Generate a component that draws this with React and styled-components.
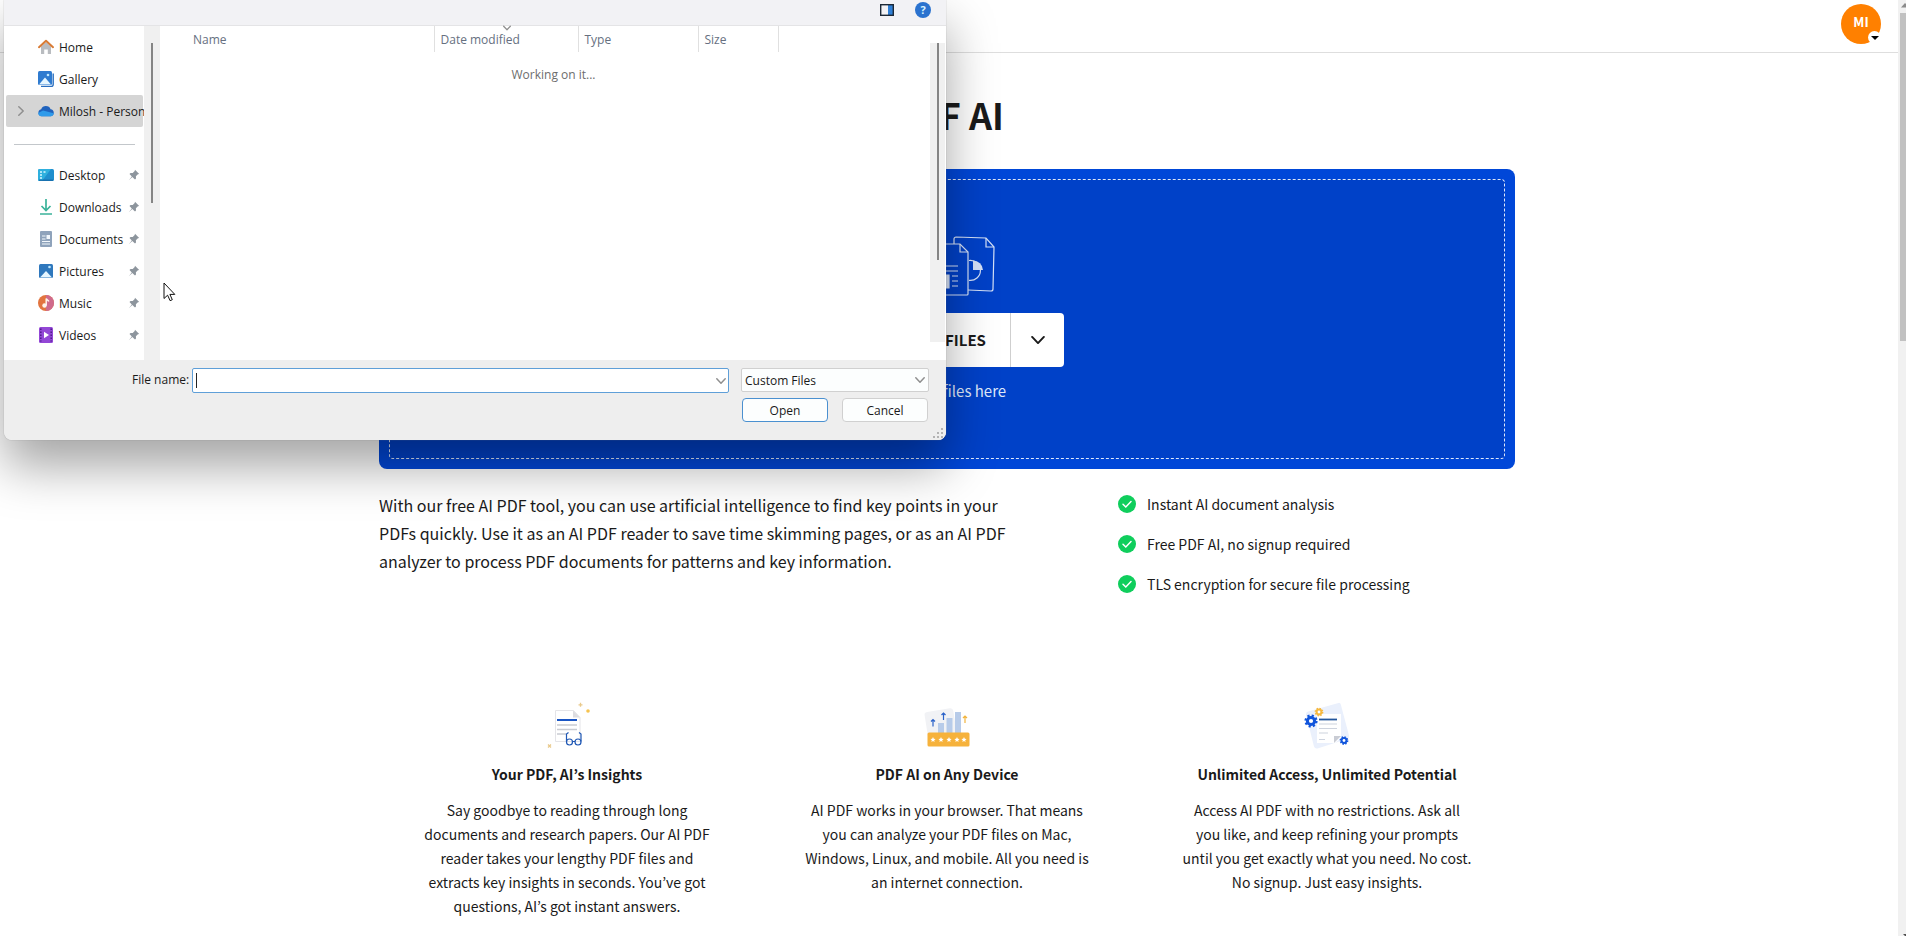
import React, { useState } from 'react'
import styled, { createGlobalStyle } from 'styled-components'

const places = [
    { name: "Home", icon: "home" },
    { name: "Gallery", icon: "gallery" },
    { name: "Milosh - Person", icon: "cloud", active: true }
];

const pinned = [
    { name: "Desktop", icon: "desktop" },
    { name: "Downloads", icon: "downloads" },
    { name: "Documents", icon: "documents" },
    { name: "Pictures", icon: "pictures" },
    { name: "Music", icon: "music" },
    { name: "Videos", icon: "videos" }
];

const benefits = [
    "Instant AI document analysis",
    "Free PDF AI, no signup required",
    "TLS encryption for secure file processing"
];

const features = [
    {
        icon: "insights",
        title: "Your PDF, AI’s Insights",
        text: "Say goodbye to reading through long documents and research papers. Our AI PDF reader takes your lengthy PDF files and extracts key insights in seconds. You’ve got questions, AI’s got instant answers."
    },
    {
        icon: "device",
        title: "PDF AI on Any Device",
        text: "AI PDF works in your browser. That means you can analyze your PDF files on Mac, Windows, Linux, and mobile. All you need is an internet connection."
    },
    {
        icon: "access",
        title: "Unlimited Access, Unlimited Potential",
        text: "Access AI PDF with no restrictions. Ask all you like, and keep refining your prompts until you get exactly what you need. No cost. No signup. Just easy insights."
    }
];

const placeIcons = {
    home: (
        <>
            <path d="M3 7.5 8 3l5 4.5V15H9.8v-4.5H6.2V15H3z" fill="#b9bcc0" />
            <path d="M1 8.2 8 1.8l7 6.4" fill="none" stroke="#d97b35" strokeWidth="2" strokeLinecap="round" strokeLinejoin="round" />
        </>
    ),
    gallery: (
        <>
            <path d="M15.2 2.5v11a2 2 0 0 1-2 2H3" fill="none" stroke="#2a6fc0" strokeWidth="1.4" />
            <rect x="0" y="0" width="14" height="14" rx="1.5" fill="#2f7bd0" />
            <path d="M1 13.5 7 6.5l6 7z" fill="#e6f6ff" />
            <circle cx="10" cy="4" r="1.3" fill="#bfe9ff" />
        </>
    ),
    cloud: (
        <>
            <path d="M3.5 13.2a3.5 3.5 0 0 1-.3-6.9A5 5 0 0 1 12.6 6.3a3.5 3.5 0 0 1 .4 6.9z" fill="#1f62bd" />
            <path d="M3.5 13.2c-2-.1-3.3-1.5-3.3-3.2L5 7.5l10.700 2.800c-.1 1.700-1.200 2.900-2.900 2.900z" fill="#2f9bea" />
        </>
    ),
    desktop: (
        <>
            <rect x="0" y="2" width="16" height="12" rx="1.5" fill="#1f8fce" />
            <path d="M0 3.5A1.5 1.5 0 0 1 1.5 2H13L4 14H1.5A1.5 1.5 0 0 1 0 12.5z" fill="#2fb0de" />
            <path d="M2 5h2M2 8h2M2 11h2M5.5 5h2" stroke="#d9f6ff" strokeWidth="1.5" />
            <path d="M1 13.2h14" stroke="#1769a8" strokeWidth="1.2" />
        </>
    ),
    downloads: (
        <path d="M8 0v11M3.5 7 8 11.5 12.5 7M2 15h12" fill="none" stroke="#3bb39a" strokeWidth="1.7" />
    ),
    documents: (
        <>
            <rect x="2" y="0" width="12" height="16" rx="1" fill="#8fa3bb" />
            <path d="M4 5h3.5M4 8h3.5M4 10.5h8M4 13h8" stroke="#f2f7fc" strokeWidth="1.2" />
            <rect x="8.5" y="4" width="3.5" height="4" fill="#f2f7fc" />
        </>
    ),
    pictures: (
        <>
            <rect x="1" y="1" width="14" height="14" rx="1.5" fill="#2f78bd" />
            <path d="M2 14.5 8 8l6 6.500z" fill="#e6f6ff" />
            <circle cx="11.5" cy="4" r="1.3" fill="#bfe9ff" />
        </>
    ),
    music: (
        <>
            <circle cx="8" cy="8" r="8" fill="#e2743f" />
            <path d="M8 0a8 8 0 0 1 0 16z" fill="#cf6a8c" />
            <circle cx="6.5" cy="10.5" r="2.2" fill="#fff3ea" />
            <path d="M8.2 10.5V3.5c.5 1.5 2 1.7 2.6 3" fill="none" stroke="#fff3ea" strokeWidth="1.5" />
        </>
    ),
    videos: (
        <>
            <rect x="1" y="0" width="14" height="16" rx="1.5" fill="#9347d6" />
            <path d="M2.8 1.5v13M13.2 1.5v13" stroke="#4f1b8c" strokeWidth="1.5" strokeDasharray="1.5 1.5" />
            <path d="M6 4.8 11 8l-5 3.2z" fill="#fff" />
        </>
    )
};

const PlaceIcon = ({ name }) => (
    <svg width="16" height="16" viewBox="0 0 16 16" aria-hidden="true">{placeIcons[name]}</svg>
)

const Pin = () => (
    <svg width="12" height="12" viewBox="0 0 12 12" aria-hidden="true">
        <path d="M7 .8 11.2 5l-1.3.3-2 2 .1 2.2-1 1L4.3 7.9.8 11.2l3-3.7L1.5 5l1-1 2.2.1 2-2z" fill="#8d959d" />
    </svg>
)

const Chevron = ({ size = 10, color = "#8f8f8f", width = 1.5 }) => (
    <svg width={size} height={size} viewBox="0 0 10 10" aria-hidden="true">
        <path d="M.8 2.8 5 7.2l4.2-4.4" fill="none" stroke={color} strokeWidth={width} strokeLinecap="round" strokeLinejoin="round" />
    </svg>
)

const CheckIcon = () => (
    <svg width="18" height="18" viewBox="0 0 18 18" aria-hidden="true">
        <circle cx="9" cy="9" r="9" fill="#0fce5c" />
        <path d="m5 9.3 2.8 2.7 5.2-5.4" fill="none" stroke="#fff" strokeWidth="1.5" strokeLinecap="round" />
    </svg>
)

const Gear = ({ x, y, r, color, hole = "#fff" }) => (
    <g transform={`translate(${x} ${y})`}>
        <circle r={r * 0.85} fill={color} />
        <circle r={r * 0.85} fill="none" stroke={color} strokeWidth={r * 0.5} strokeDasharray={`${r * 0.334} ${r * 0.334}`} />
        <circle r={r * 0.35} fill={hole} />
    </g>
)

const star = "M0-2.6.8-.8l1.8.2L1.2.7l.4 1.9L0 1.6l-1.6 1 .4-1.900-1.400-1.300 1.800-.2z";

const featureIcons = {
    insights: (
        <>
            <path d="M12.5 8.5h18l6.500 7v24H12.500z" fill="#fff" stroke="#e4e4e8" />
            <path d="M30 8.5v7h7z" fill="#dcdce0" />
            <path d="M14 18h20" stroke="#1a55c4" strokeWidth="2" />
            <path d="M14 23h20M14 27.5h20M14 32h9" stroke="#c9ccd2" strokeWidth="1.3" />
            <g fill="none" stroke="#1f57b4" strokeWidth="1.2">
                <circle cx="26.5" cy="40" r="3" />
                <circle cx="35" cy="40" r="3" />
                <path d="M29.5 39.5h2.500M23.5 39.5V32l2-1.5M38 39.5V32l-2-1.5" />
            </g>
            <path d="M37.5.8v4M35.5 2.8h4M5 42.5l3 3M8 42.5l-3 3" stroke="#e9c98a" strokeWidth="1.3" />
            <circle cx="45" cy="9" r="1.8" fill="#f6c34f" />
        </>
    ),
    device: (
        <>
            <rect x="3" y="8" width="29" height="27" rx="3" fill="#f1f2f5" transform="rotate(-9 17 21)" />
            <path d="M15 21h6v10h-6zM23.5 16h6v15h-6zM32 10h6v21h-6z" fill="#b7cbe9" />
            <path d="M10 24.5v-7M8 19.5l2-2 2 2M20.5 18v-7M18.5 13l2-2 2 2" fill="none" stroke="#2a62c9" strokeWidth="1.2" />
            <path d="M42 21v-7M40 16l2-2 2 2" fill="none" stroke="#f2b43c" strokeWidth="1.2" />
            <rect x="4.5" y="30.5" width="42" height="14" rx="1.5" fill="#f6b23c" />
            {[10, 18, 26, 34, 41].map(x => <path key={x} d={star} transform={`translate(${x} 37.5)`} fill="#fff" />)}
        </>
    ),
    access: (
        <>
            <path d="M3 12.5a3 3 0 0 1 2-3L35.5.9a2 2 0 0 1 2.3 1.5L46 33.5a3 3 0 0 1-2 3.5L14.5 46.5a3 3 0 0 1-3.5-2z" fill="#eaf0fc" />
            <path d="M14 12h24v24l-6 5H14z" fill="#fff" />
            <path d="M31 34h7l-7 7z" fill="#c9ccd4" />
            <path d="M16 17.5h18" stroke="#23569c" strokeWidth="1.8" />
            <path d="M16 22h18M16 26.5h18M16 31h9M16 37.5h6" stroke="#cdd3de" strokeWidth="1.2" />
            <Gear x={8} y={19} r={6} color="#1155dc" />
            <Gear x={16} y={10} r={4} color="#f6b83f" />
            <Gear x={41} y={38.5} r={4} color="#1155dc" />
        </>
    )
};

const FilesArt = () => (
    <svg width="96" height="60" viewBox="0 0 96 60" fill="none" stroke="#d5e1f7" strokeWidth="1.2" aria-hidden="true">
        <path d="M41 8V3a2 2 0 0 0-2-2L9 2 1 10l1 42a2 2 0 0 0 2 2l23-1" />
        <path d="M55 8V3a2 2 0 0 1 2-2l30 1 8 9-1 42a2 2 0 0 1-2 2l-23-1" />
        <path d="m87 2 0 9h8" />
        <path d="M27 10a2 2 0 0 1 2-2h32l8 8v42a1 1 0 0 1-1 1H28a1 1 0 0 1-1-1z" fill="#0041c8" />
        <path d="M61 8v8h8M33 30h26M33 35h26M53 40h6M53 45h6M53 50h6" />
        <path d="M33 39h17v13H33z" fill="#d5e1f7" />
        <path d="M70 24.5a10 10 0 1 1 0 19.8" />
        <path d="M74 34V24.5A10 10 0 0 1 84 34z" fill="#d5e1f7" stroke="none" />
    </svg>
)

const Cursor = () => (
    <CursorIcon width="14" height="20" viewBox="0 0 14 20" aria-hidden="true">
        <path d="M1 1v15.5l3.6-3.3 2.5 5.5 2.2-1-2.4-5.3h4.900z" fill="#fff" stroke="#111" />
    </CursorIcon>
)

const Place = ({ place, isPinned }) => (
    <PlaceItem type="button" $active={place.active}>
        <Expander>{place.active && <Chevron />}</Expander>
        <PlaceIcon name={place.icon} />
        <PlaceName>{place.name}</PlaceName>
        {isPinned && <Pin />}
    </PlaceItem>
)

const FileDialog = () => {
    const [fileName, setFileName] = useState("");

    return (
        <Dialog role="dialog" aria-label="Open">
            <DialogBar>
                <IconButton type="button" aria-label="Preview pane">
                    <svg width="14" height="12" viewBox="0 0 14 12">
                        <rect x="8" y="1" width="5" height="10" fill="#2f7fd6" />
                        <rect x=".7" y=".7" width="12.6" height="10.6" fill="none" stroke="#1c2836" strokeWidth="1.4" />
                    </svg>
                </IconButton>
                <HelpButton type="button" aria-label="Help">?</HelpButton>
            </DialogBar>
            <DialogBody>
                <Places>
                    {places.map(place => <Place key={place.name} place={place} />)}
                    <Divider />
                    {pinned.map(place => <Place key={place.name} place={place} isPinned />)}
                </Places>
                <PlacesScroll><ScrollThumb $height={160} /></PlacesScroll>
                <FileList>
                    <FileTable>
                        <thead>
                            <tr>
                                <Column $width={241}>Name</Column>
                                <Column $width={144}><SortMark><Chevron size={8} /></SortMark>Date modified</Column>
                                <Column $width={120}>Type</Column>
                                <Column $width={80}>Size</Column>
                            </tr>
                        </thead>
                    </FileTable>
                    <Status>Working on it...</Status>
                </FileList>
                <ListScroll><ScrollThumb $height={217} /></ListScroll>
            </DialogBody>
            <DialogFooter>
                <label htmlFor="file-name">File name:</label>
                <NameBox>
                    <Caret />
                    <input
                        id="file-name"
                        type="text"
                        value={fileName}
                        onChange={event => setFileName(event.target.value)} />
                    <Chevron />
                </NameBox>
                <Actions>
                    <TypeBox>
                        <select aria-label="File type" defaultValue="custom">
                            <option value="custom">Custom Files</option>
                        </select>
                        <Chevron />
                    </TypeBox>
                    <ButtonRow>
                        <DialogButton type="button" $primary>Open</DialogButton>
                        <DialogButton type="button">Cancel</DialogButton>
                    </ButtonRow>
                </Actions>
                <Grip width="10" height="10" viewBox="0 0 10 10" aria-hidden="true">
                    <path d="M8 1h2M8 5h2M4 5h2M8 9h2M4 9h2M0 9h2" stroke="#b3b3b3" strokeWidth="2" />
                </Grip>
            </DialogFooter>
        </Dialog>
    )
}

const App = () => (
    <Page>
        <GlobalStyle />
        <Content>
            <Header>
                <Account type="button" aria-label="Account">
                    MI
                    <AccountCaret>
                        <svg width="8" height="4" viewBox="0 0 8 4"><path d="M0 0h8L4 4z" fill="#000" /></svg>
                    </AccountCaret>
                </Account>
            </Header>
            <Main>
                <Title>PDF AI</Title>
                <Hero>
                    <DropZone>
                        <FilesArt />
                        <Choose>
                            <ChooseButton type="button">CHOOSE FILES</ChooseButton>
                            <ChooseMore type="button" aria-label="More sources">
                                <Chevron size={14} color="#1a1a1a" width={1.4} />
                            </ChooseMore>
                        </Choose>
                        <p>or drop files here</p>
                    </DropZone>
                </Hero>
                <Intro>
                    <p>
                        With our free AI PDF tool, you can use artificial intelligence to find key points in your
                        PDFs quickly. Use it as an AI PDF reader to save time skimming pages, or as an AI PDF
                        analyzer to process PDF documents for patterns and key information.
                    </p>
                    <ul>
                        {benefits.map(benefit => <li key={benefit}><CheckIcon />{benefit}</li>)}
                    </ul>
                </Intro>
                <Features>
                    {features.map(feature => (
                        <Feature key={feature.title}>
                            <svg width="48" height="48" viewBox="0 0 48 48" aria-hidden="true">{featureIcons[feature.icon]}</svg>
                            <h2>{feature.title}</h2>
                            <p>{feature.text}</p>
                        </Feature>
                    ))}
                </Features>
            </Main>
        </Content>
        <PageScroll>
            <svg width="8" height="13" viewBox="0 0 8 13"><path d="M3 7.5 7 3l1 1v3.5z" fill="#8b8b8b" /></svg>
            <PageThumb />
            <svg width="8" height="8" viewBox="0 0 8 8"><path d="M5 6h3v2H7z" fill="#505050" /></svg>
        </PageScroll>
        <FileDialog />
        <Cursor />
    </Page>
)

const GlobalStyle = createGlobalStyle`
    * {
        box-sizing: border-box;
        margin: 0;
        padding: 0;
    }
    body {
        background: #fff;
        color: #1a1a1a;
        font-family: "Noto Sans CJK KR", "Open Sans", sans-serif;
        overflow: hidden;
    }
    button, input, select {
        font: inherit;
        color: inherit;
    }
    svg {
        flex-shrink: 0;
    }
`;

const Page = styled.div`
    display: flex;
    position: relative;
    height: 100vh;
    overflow: hidden;
`;

const Content = styled.div`
    flex: 1;
    min-width: 0;
`;

const Header = styled.header`
    display: flex;
    justify-content: flex-end;
    align-items: center;
    height: 53px;
    padding: 0 17px 4px;
    border-bottom: 1px solid #dedede;
`;

const Account = styled.button`
    position: relative;
    width: 40px;
    height: 40px;
    border: 0;
    border-radius: 50%;
    background: #ff8000;
    color: #fff;
    font-size: 13px;
    line-height: 36px;
    padding-bottom: 4px;
    font-weight: 700;
`;

const AccountCaret = styled.span`
    position: absolute;
    right: 0;
    bottom: 0;
    display: flex;
    align-items: center;
    justify-content: center;
    width: 13px;
    height: 13px;
    border-radius: 50%;
    background: #fff;
`;

const Main = styled.main`
    padding: 33px 4px 0 0;
`;

const Title = styled.h1`
    height: 83px;
    font-size: 36px;
    line-height: 56px;
    font-weight: 700;
    text-align: center;
`;

const Hero = styled.section`
    max-width: 1136px;
    margin: 0 auto;
    padding: 10px;
    border-radius: 8px;
    background: #0047d8;
`;

const DropZone = styled.div`
    display: flex;
    flex-direction: column;
    align-items: center;
    height: 280px;
    padding-top: 56px;
    border: 1px dashed #dfe8fa;
    border-radius: 4px;
    background: #0041c8;
    color: #dfe8fa;
    &>p {
        margin-top: 12px;
        font-size: 15px;
        line-height: 24px;
    }
`;

const Choose = styled.div`
    display: flex;
    height: 54px;
    margin-top: 17px;
    border-radius: 4px;
    background: #fff;
    color: #1a1a1a;
    overflow: hidden;
`;

const ChooseButton = styled.button`
    width: 181px;
    padding: 0 24px 2px 0;
    border: 0;
    border-right: 1px solid #cfcfcf;
    background: none;
    font-size: 15px;
    font-weight: 700;
    text-align: right;
`;

const ChooseMore = styled.button`
    display: flex;
    align-items: center;
    justify-content: center;
    width: 53px;
    border: 0;
    background: none;
`;

const Intro = styled.section`
    display: flex;
    justify-content: space-between;
    max-width: 1136px;
    margin: 0 auto;
    padding-top: 22px;
    &>p {
        width: 640px;
        font-size: 16px;
        line-height: 28px;
    }
    &>ul {
        width: 397px;
        padding-top: 1px;
        list-style: none;
    }
    li {
        display: flex;
        align-items: center;
        gap: 11px;
        height: 24px;
        margin-bottom: 16px;
        font-size: 14px;
    }
`;

const Features = styled.section`
    display: grid;
    grid-template-columns: repeat(3, 1fr);
    max-width: 1140px;
    margin: 0 auto;
    padding-top: 90px;
`;

const Feature = styled.article`
    display: flex;
    flex-direction: column;
    align-items: center;
    text-align: center;
    h2 {
        margin: 12px 0;
        font-size: 14px;
        line-height: 24px;
        font-weight: 700;
    }
    p {
        width: 292px;
        font-size: 14px;
        line-height: 24px;
    }
`;

const PageScroll = styled.div`
    display: flex;
    flex-direction: column;
    width: 8px;
    background: #f1f1f1;
    &>svg:last-child {
        margin-top: auto;
    }
`;

const PageThumb = styled.div`
    height: 35%;
    margin-left: 2px;
    background: #c1c1c1;
`;

const Dialog = styled.div`
    position: absolute;
    top: 0;
    left: 4px;
    width: 942px;
    border-radius: 0 0 8px 8px;
    background: #fff;
    box-shadow: 0 0 1px #777, 0 26px 50px rgba(0, 0, 0, 0.36);
    color: #1a1a1a;
    font-family: "Open Sans", "Noto Sans", sans-serif;
    font-size: 12px;
`;

const DialogBar = styled.div`
    display: flex;
    justify-content: flex-end;
    align-items: center;
    gap: 21px;
    height: 26px;
    padding: 0 15px 5px;
    border-bottom: 1px solid #e4e4e6;
    background: #f2f2f5;
`;

const IconButton = styled.button`
    display: flex;
    border: 0;
    background: none;
`;

const HelpButton = styled.button`
    width: 16px;
    height: 16px;
    border: 0;
    border-radius: 50%;
    background: #2a72cf;
    color: #d8f2ff;
    font-size: 11px;
    line-height: 16px;
    font-weight: 700;
`;

const DialogBody = styled.div`
    display: flex;
    height: 334px;
    padding-right: 1px;
`;

const Places = styled.nav`
    width: 140px;
    padding: 5px 1px 0 2px;
`;

const PlaceItem = styled.button`
    display: flex;
    align-items: center;
    width: 100%;
    height: 32px;
    padding-right: ${props => props.$active ? 0 : 3}px;
    border: 0;
    border-radius: 2px;
    background: ${props => props.$active ? '#d5d5d5' : 'none'};
    text-align: left;
    white-space: nowrap;
`;

const PlaceName = styled.span`
    flex: 1;
    min-width: 0;
    margin-left: 5px;
`;

const Expander = styled.span`
    display: flex;
    width: 32px;
    padding-left: 10px;
    flex-shrink: 0;
    svg {
        transform: rotate(-90deg);
    }
`;

const Divider = styled.hr`
    margin: 17px 8px 14px;
    border: 0;
    border-top: 1px solid #c3c7cb;
`;

const PlacesScroll = styled.div`
    width: 16px;
    padding: 17px 0 0 7px;
    background: #f0f0f0;
`;

const ListScroll = styled.div`
    width: 15px;
    height: 299px;
    margin-top: 17px;
    padding-left: 7px;
    background: #f0f0f0;
`;

const ScrollThumb = styled.div`
    width: 2px;
    height: ${props => props.$height}px;
    background: #858585;
`;

const FileList = styled.div`
    flex: 1;
    padding-left: 33px;
`;

const FileTable = styled.table`
    border-collapse: collapse;
    table-layout: fixed;
    width: 585px;
`;

const Column = styled.th`
    position: relative;
    width: ${props => props.$width}px;
    height: 26px;
    padding-left: 6px;
    border-right: 1px solid #e0e0e0;
    color: #66707f;
    font-weight: 400;
    text-align: left;
    &:first-child {
        padding-left: 0;
    }
`;

const SortMark = styled.span`
    position: absolute;
    top: -2px;
    left: 68px;
    display: flex;
`;

const Status = styled.p`
    margin-top: 14px;
    padding-right: 16px;
    color: #6d6d6d;
    line-height: 18px;
    text-align: center;
`;

const DialogFooter = styled.div`
    position: relative;
    display: flex;
    height: 80px;
    padding: 8px 17px 0 128px;
    border-radius: 0 0 8px 8px;
    background: #eee;
    &>label {
        width: 60px;
        line-height: 24px;
    }
`;

const NameBox = styled.div`
    display: flex;
    flex: 1;
    align-items: center;
    height: 25px;
    padding: 0 2px 0 3px;
    border: 1px solid #5f9fd8;
    border-radius: 2px;
    background: #fff;
    input {
        flex: 1;
        border: 0;
        outline: 0;
        background: none;
    }
`;

const Caret = styled.span`
    width: 1px;
    height: 15px;
    background: #222;
`;

const Actions = styled.div`
    width: 188px;
    margin-left: 12px;
`;

const TypeBox = styled.div`
    display: flex;
    align-items: center;
    height: 24px;
    padding: 0 3px;
    border: 1px solid #d0d0d0;
    border-radius: 2px;
    background: #fcfefe;
    select {
        flex: 1;
        appearance: none;
        border: 0;
        outline: 0;
        background: none;
    }
`;

const ButtonRow = styled.div`
    display: flex;
    justify-content: space-between;
    margin: 6px 1px 0;
`;

const DialogButton = styled.button`
    width: 86px;
    height: 24px;
    border: 1px solid ${props => props.$primary ? '#4a90d0' : '#d0d0d0'};
    border-radius: 4px;
    background: #fcfefe;
`;

const Grip = styled.svg`
    position: absolute;
    right: 3px;
    bottom: 2px;
`;

const CursorIcon = styled.svg`
    position: absolute;
    top: 282px;
    left: 163px;
`;

export default App;
